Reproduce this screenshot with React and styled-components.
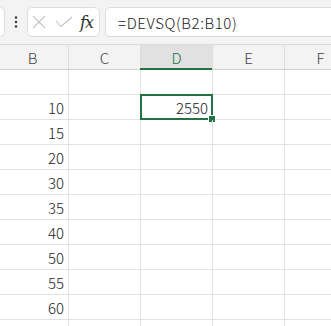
import styled, { createGlobalStyle } from "styled-components";

const Global = createGlobalStyle`
  html, body {
    margin: 0;
    padding: 0;
    background: #ffffff;
    overflow: hidden;
  }
  body {
    font-family: "Noto Sans CJK JP", "Noto Sans", sans-serif;
    font-weight: 300;
  }
`;

const Page = styled.div`
  width: 331px;
  height: 326px;
  overflow: hidden;
  background: #fff;
`;

const Toolbar = styled.div`
  height: 45px;
  box-sizing: border-box;
  background: #f3f3f3;
  border-bottom: 1px solid #dadada;
  display: flex;
  align-items: center;
`;

const Box = styled.div`
  height: 30px;
  box-sizing: border-box;
  background: #fff;
  border: 1px solid #dcdcdc;
  border-radius: 5px;
  display: flex;
  align-items: center;
`;

const NameBox = styled(Box)`
  width: 20px;
  margin-left: -15px;
`;

const Dots = styled.div`
  width: 22px;
  display: flex;
  justify-content: center;
`;

const FuncBox = styled(Box)`
  width: 73px;
  padding-left: 4px;
`;

const Fx = styled.span`
  font-family: "DejaVu Serif", "Liberation Serif", serif;
  font-style: italic;
  font-weight: 500;
  font-size: 16px;
  color: #2a2a2a;
  margin-left: 7px;
  letter-spacing: -1px;
`;

const FormulaBox = styled(Box)`
  flex: 1;
  margin-left: 5px;
  margin-right: -10px;
  padding-left: 12px;
  font-size: 15px;
  color: #222;
  letter-spacing: 0.6px;
`;

const Grid = styled.div`
  margin-left: -3px;
`;

const Row = styled.div`
  display: flex;
  height: 25px;
  box-sizing: border-box;
  border-bottom: 1px solid ${(p) => (p.$head ? "#d0d0d0" : "#e1e1e1")};
  background: ${(p) => (p.$head ? "#f3f3f3" : "#fff")};
`;

const Cell = styled.div`
  position: relative;
  flex: 0 0 72px;
  box-sizing: border-box;
  border-right: 1px solid #e1e1e1;
  display: flex;
  align-items: center;
  justify-content: flex-end;
  padding-right: 4px;
  font-size: 15px;
  color: #222;
`;

const HeadCell = styled(Cell)`
  justify-content: center;
  padding-right: 0;
  border-right-color: #dcdcdc;
  color: ${(p) => (p.$active ? "#217346" : "#444")};
  background: ${(p) => (p.$active ? "#e1e1e1" : "transparent")};
  &::after {
    content: "";
    display: ${(p) => (p.$active ? "block" : "none")};
    position: absolute;
    left: -1px;
    right: 0;
    bottom: -1px;
    height: 2px;
    background: #217346;
  }
`;

const Selection = styled.div`
  position: absolute;
  left: -1px;
  top: -1px;
  right: -1px;
  bottom: -1px;
  border: 2px solid #217346;
  pointer-events: none;
`;

const Handle = styled.div`
  position: absolute;
  right: -5px;
  bottom: -5px;
  width: 6px;
  height: 6px;
  background: #217346;
  border: 1px solid #fff;
`;

const cols = ["B", "C", "D", "E", "F"];
const values = ["", "10", "15", "20", "30", "35", "40", "50", "55", "60", ""];

export default function App() {
  return (
    <Page>
      <Global />
      <Toolbar>
        <NameBox />
        <Dots>
          <svg width="4" height="12" viewBox="0 0 4 12">
            <circle cx="2" cy="1.5" r="1.2" fill="#333" />
            <circle cx="2" cy="6" r="1.2" fill="#333" />
            <circle cx="2" cy="10.5" r="1.2" fill="#333" />
          </svg>
        </Dots>
        <FuncBox>
          <svg width="14" height="14" viewBox="0 0 14 14">
            <path d="M1 1 L13 13 M13 1 L1 13" stroke="#c4c4c4" strokeWidth="1.1" fill="none" />
          </svg>
          <svg width="18" height="12" viewBox="0 0 18 12" style={{ marginLeft: 9 }}>
            <path d="M1 5 L6 10.5 L17 1" stroke="#c4c4c4" strokeWidth="1.1" fill="none" />
          </svg>
          <Fx>fx</Fx>
        </FuncBox>
        <FormulaBox>=DEVSQ(B2:B10)</FormulaBox>
      </Toolbar>
      <Grid>
        <Row $head>
          {cols.map((c) => (
            <HeadCell key={c} $active={c === "D"}>
              {c}
            </HeadCell>
          ))}
        </Row>
        {values.map((v, i) => (
          <Row key={i}>
            <Cell>{v}</Cell>
            <Cell />
            <Cell>
              {i === 1 && "2550"}
              {i === 1 && (
                <Selection>
                  <Handle />
                </Selection>
              )}
            </Cell>
            <Cell />
            <Cell />
          </Row>
        ))}
      </Grid>
    </Page>
  );
}
